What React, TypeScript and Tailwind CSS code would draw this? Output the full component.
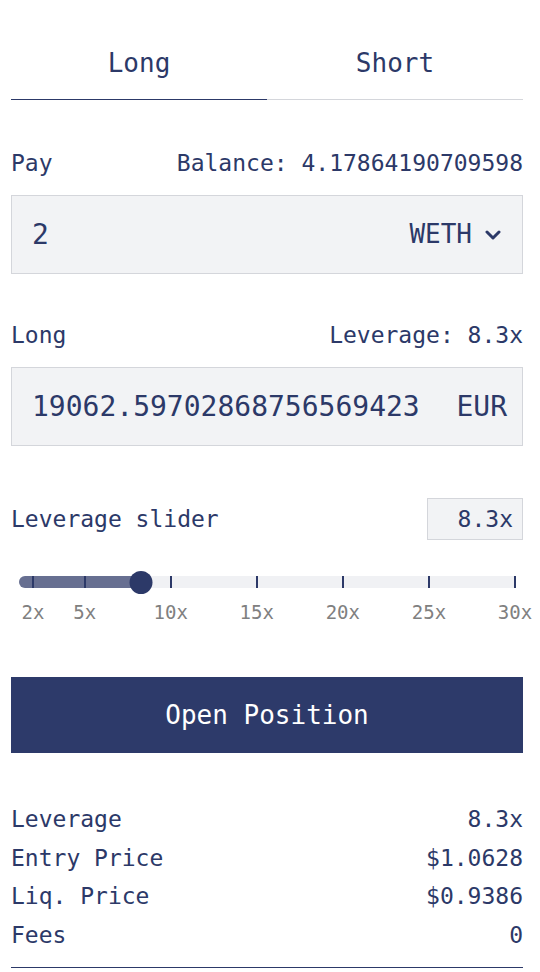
import { useState } from "react"

const ticks = [2, 5, 10, 15, 20, 25, 30]

// slider geometry: track 497px wide, ticks run from 14 to 496 inside it
const tickX = (v: number) => 14 + ((v - 2) / 28) * 482

const Chevron = () => (
  <svg width="16" height="10" viewBox="0 0 16 10" fill="none">
    <polyline points="2,2 8,8 14,2" stroke="#2c3968" strokeWidth="3" strokeLinecap="round" strokeLinejoin="round" />
  </svg>
)

const SummaryRow = ({ label, value }: { label: string; value: string }) => (
  <div className="flex h-[38.5px] items-center justify-between text-[23px]">
    <span>{label}</span>
    <span>{value}</span>
  </div>
)

export default function App() {
  const [side, setSide] = useState<"long" | "short">("long")
  const leverage = 8.3

  const labelStyles = "flex items-center justify-between text-[23px] leading-[30px]"
  const boxStyles = "flex h-[79px] items-center justify-between border border-[#d4d6db] bg-[#f2f3f5]"

  return (
    <div
      className="min-h-[972px] w-[540px] bg-white px-[11px] text-[#2c3968]"
      style={{ fontFamily: '"DejaVu Sans Mono", "Liberation Mono", monospace' }}
    >
      <div className="w-[512px]">
        <div className="flex">
          <button
            onClick={() => setSide("long")}
            className={`flex-1 pt-[46px] pb-[19px] text-center text-[26px] leading-[34px] border-b ${
              side === "long" ? "border-[#2c3968]" : "border-[#d4d6db]"
            }`}
          >
            Long
          </button>
          <button
            onClick={() => setSide("short")}
            className={`flex-1 pt-[46px] pb-[19px] text-center text-[26px] leading-[34px] border-b ${
              side === "short" ? "border-[#2c3968]" : "border-[#d4d6db]"
            }`}
          >
            Short
          </button>
        </div>

        <div className={`${labelStyles} mt-[48px]`}>
          <span>Pay</span>
          <span>Balance: 4.17864190709598</span>
        </div>
        <div className={`${boxStyles} mt-[17px] pl-[20px] pr-[21px]`}>
          <span className="text-[28px]">2</span>
          <span className="flex items-center gap-[13px] text-[26px]">
            WETH
            <Chevron />
          </span>
        </div>

        <div className={`${labelStyles} mt-[46px]`}>
          <span>Long</span>
          <span>Leverage: 8.3x</span>
        </div>
        <div className={`${boxStyles} mt-[17px] pl-[20px] pr-[15px]`}>
          <span className="text-[28px]">19062.59702868756569423</span>
          <span className="text-[28px]">EUR</span>
        </div>

        <div className="mt-[52px] flex items-center justify-between">
          <span className="text-[23px]">Leverage slider</span>
          <div className="flex h-[42px] w-[96px] items-center justify-end border border-[#d4d6db] bg-[#f2f3f5] pr-[9px] text-[23px]">
            8.3x
          </div>
        </div>

        <div className="relative mx-[8px] mt-[30px] h-[24px] w-[497px]">
          <div className="absolute left-0 right-0 top-[6px] h-[12px] rounded-l-full bg-[#f0f1f4]" />
          <div
            className="absolute left-0 top-[6px] h-[12px] rounded-l-full bg-[#676f91]"
            style={{ width: tickX(leverage) }}
          />
          {ticks.map((t) => (
            <div
              key={t}
              className="absolute top-[6px] h-[12px] w-[2px] -translate-x-1/2 bg-[#2c3968]"
              style={{ left: tickX(t) }}
            />
          ))}
          <div
            className="absolute top-[0.5px] h-[23px] w-[23px] -translate-x-1/2 rounded-full bg-[#2c3968]"
            style={{ left: tickX(leverage) }}
          />
        </div>
        <div className="relative mx-[8px] mt-[6px] h-[24px] w-[497px] text-[19px] leading-[24px] text-[#808080]">
          {ticks.map((t) => (
            <span key={t} className="absolute top-0 -translate-x-1/2" style={{ left: tickX(t) }}>
              {t}x
            </span>
          ))}
        </div>

        <button className="mt-[53px] flex h-[76px] w-full items-center justify-center bg-[#2d3a6a] text-[26px] text-white">
          Open Position
        </button>

        <div className="mt-[47px]">
          <SummaryRow label="Leverage" value="8.3x" />
          <SummaryRow label="Entry Price" value="$1.0628" />
          <SummaryRow label="Liq. Price" value="$0.9386" />
          <SummaryRow label="Fees" value="0" />
        </div>
        <div className="mt-[13px] h-px bg-[#2c3968]" />
      </div>
    </div>
  )
}
